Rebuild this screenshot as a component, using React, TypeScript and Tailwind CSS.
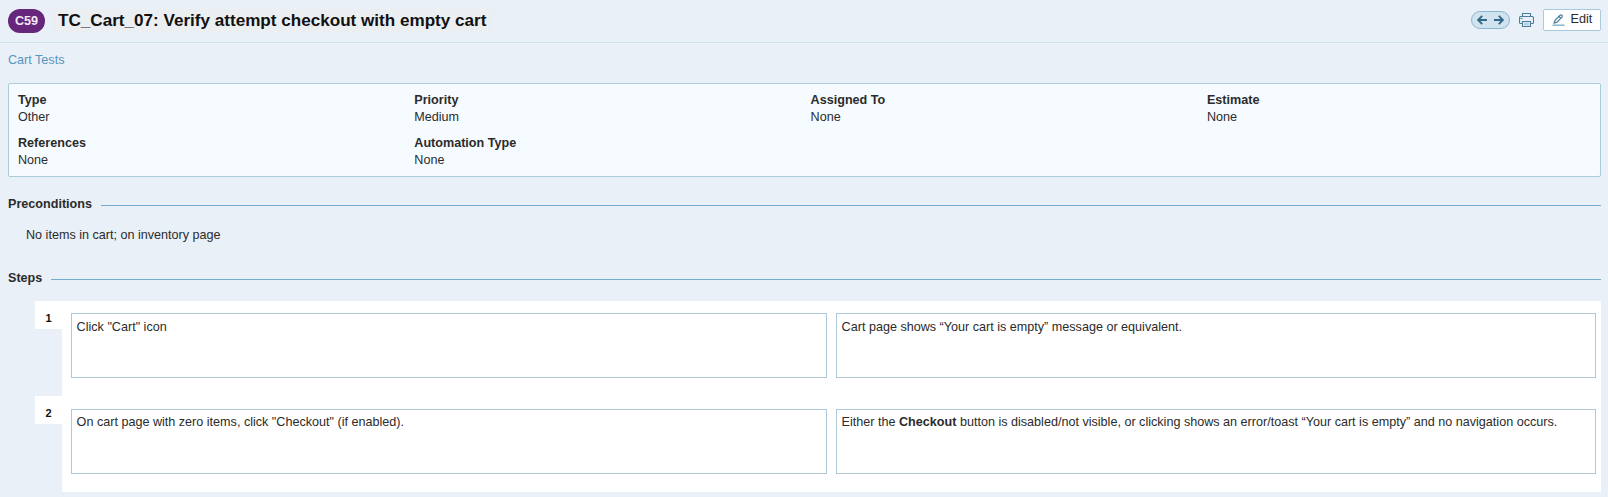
import type { ReactNode } from "react";

const fields = [
  ["Type", "Other"],
  ["Priority", "Medium"],
  ["Assigned To", "None"],
  ["Estimate", "None"],
  ["References", "None"],
  ["Automation Type", "None"],
];

const steps: { action: ReactNode; expected: ReactNode }[] = [
  {
    action: 'Click "Cart" icon',
    expected: "Cart page shows “Your cart is empty” message or equivalent.",
  },
  {
    action: 'On cart page with zero items, click "Checkout" (if enabled).',
    expected: (
      <>
        Either the <b>Checkout</b> button is disabled/not visible, or clicking shows an error/toast “Your cart is
        empty” and no navigation occurs.
      </>
    ),
  },
];

function ArrowLeft() {
  return (
    <svg width="10" height="10" viewBox="0 0 10 10" fill="none" stroke="#33688b" strokeWidth="1.9">
      <path d="M5.2 0.9 1.2 5l4 4.1M1.4 5H10" />
    </svg>
  );
}

function ArrowRight() {
  return (
    <svg width="10" height="10" viewBox="0 0 10 10" fill="none" stroke="#33688b" strokeWidth="1.9">
      <path d="M4.8 0.9 8.8 5l-4 4.1M8.6 5H0" />
    </svg>
  );
}

function Printer() {
  return (
    <svg width="15" height="14" viewBox="0 0 15 14" fill="none" stroke="#4d7f9c" strokeWidth="1.1">
      <path d="M3.5 4V.5h8V4" />
      <path d="M3.5 10.5H1.5a1 1 0 0 1-1-1v-4.500q0-1.500 1.500-1.500h11q1.500 0 1.500 1.500v4.500a1 1 0 0 1-1 1h-2" />
      <path d="M3.500 8.500h8v5h-8z" fill="#eaf1f7" />
      <path d="M5 9.500h5v3H5z" fill="#b5d0e0" stroke="none" />
      <path d="M1.500 5.500h2" stroke="#2fa58b" />
    </svg>
  );
}

function Pencil() {
  return (
    <svg width="13" height="12" viewBox="0 0 13 12" fill="none" stroke="#4d7f9c" strokeWidth="1.2">
      <path d="M2.2 9 3 6.200 8.100 1.200q.8-.7 1.600 0l.3.3q.7.8 0 1.600L4.900 8.200zM7 2.500l1.800 1.800" />
      <path d="M0.500 11.200h12" stroke="#7fb0cb" strokeWidth="1.400" />
    </svg>
  );
}

function SectionTitle({ children }: { children: ReactNode }) {
  return (
    <div className="flex h-4 gap-[9px]">
      <h2 className="font-bold">{children}</h2>
      <div className="mt-[9px] h-px flex-1 bg-[#74add1]" />
    </div>
  );
}

function StepBox({ className, children }: { className: string; children: ReactNode }) {
  return (
    <div className={`h-[65px] border border-[#aec8d7] bg-white pl-[4.6px] whitespace-nowrap ${className}`}>
      {children}
    </div>
  );
}

export default function App() {
  return (
    <div className="h-[497px] w-[1608px] overflow-hidden bg-[#e9f0f7] font-['Liberation_Sans',Arial,sans-serif] text-[12.6px] leading-4 text-[#2b2b2b]">
      <header className="flex h-[43px] border-b border-[#cbe1eb] pl-2 pr-[7px] pt-[9px]">
        <span className="flex h-6 w-[37px] items-center justify-center rounded-xl bg-[#66267b] text-[12.6px] font-bold text-[#f3e9f7]">
          C59
        </span>
        <h1 className="ml-2 h-[23px] bg-[#ebeff2] px-[5px] text-[17.1px] leading-[23px] font-bold text-[#111]">
          TC_Cart_07: Verify attempt checkout with empty cart
        </h1>
        <div className="ml-auto flex">
          <div className="mt-[2px] flex h-[18px] w-[39px] items-center justify-between rounded-full border border-[#8db7d0] bg-[#d0e3ee] px-[5px]">
            <ArrowLeft />
            <ArrowRight />
          </div>
          <div className="ml-[9px] mt-1">
            <Printer />
          </div>
          <button className="ml-[9px] flex h-[22px] w-[58px] rounded-[2px] border border-[#a9cadd] bg-white pl-2">
            <span className="mt-1">
              <Pencil />
            </span>
            <span className="ml-[5.6px] mt-px">Edit</span>
          </button>
        </div>
      </header>

      <main className="pl-2 pr-[7px]">
        <a className="block h-10 pt-[9px] text-[#5796bf]">Cart Tests</a>

        <section className="grid h-[94px] grid-cols-[repeat(4,396.3px)] content-start gap-y-[9px] overflow-hidden rounded-[2px] border border-[#abcbdd] bg-[#f6fbff] pl-[9px] pt-2">
          {fields.map(([label, value]) => (
            <div key={label} className="leading-4">
              <div className="h-[17px] font-bold">{label}</div>
              <div className="h-[17px]">{value}</div>
            </div>
          ))}
        </section>

        <div className="mt-[19px]">
          <SectionTitle>Preconditions</SectionTitle>
        </div>
        <p className="mt-[15px] pl-[18px]">No items in cart; on inventory page</p>
        <div className="mt-[27px]">
          <SectionTitle>Steps</SectionTitle>
        </div>

        <div className="mt-[15px] ml-[27px]">
          {steps.map((step, i) => (
            <div key={i} className={i === 0 ? "flex h-[95px]" : "flex h-24"}>
              <div className="h-7 w-[27px] bg-white pt-[10px] text-center text-[11px] leading-[14px] font-bold text-[#111]">
                {i + 1}
              </div>
              <div className={`flex flex-1 gap-[9px] bg-white pr-[5px] pl-[9px] ${i === 0 ? "pt-3" : "pt-[13px]"}`}>
                <StepBox className={i === 0 ? "w-[756px] pt-[5px]" : "w-[756px] pt-1"}>{step.action}</StepBox>
                <StepBox className={i === 0 ? "flex-1 pt-[5px]" : "flex-1 pt-1"}>{step.expected}</StepBox>
              </div>
            </div>
          ))}
        </div>
      </main>
    </div>
  );
}
